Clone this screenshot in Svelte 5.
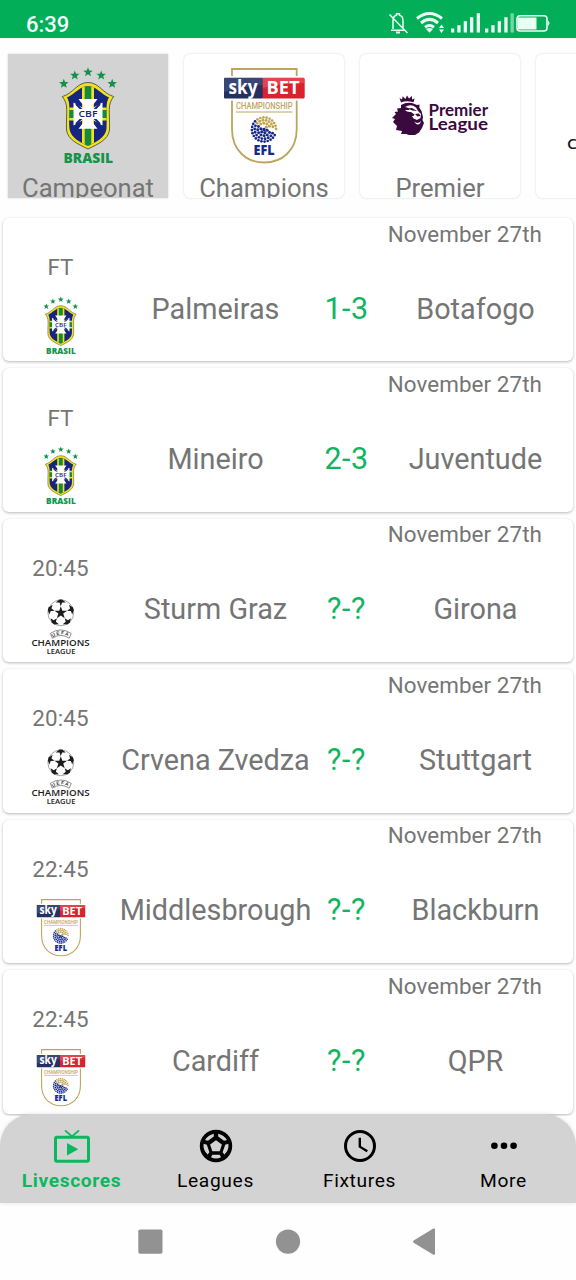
<script>
  const leagues = [
    { name: 'Campeonat', logo: 'brasil', active: true },
    { name: 'Champions', logo: 'efl' },
    { name: 'Premier', logo: 'premier' },
    { name: '', logo: 'ucl' }
  ];

  const matches = [
    { time: 'FT', logo: 'brasil', home: 'Palmeiras', score: '1-3', away: 'Botafogo' },
    { time: 'FT', logo: 'brasil', home: 'Mineiro', score: '2-3', away: 'Juventude' },
    { time: '20:45', logo: 'ucl', home: 'Sturm Graz', score: '?-?', away: 'Girona' },
    { time: '20:45', logo: 'ucl', home: 'Crvena Zvedza', score: '?-?', away: 'Stuttgart' },
    { time: '22:45', logo: 'efl', home: 'Middlesbrough', score: '?-?', away: 'Blackburn' },
    { time: '22:45', logo: 'efl', home: 'Cardiff', score: '?-?', away: 'QPR' }
  ];

  const polygon = (cx, cy, r, inner, rot = 0) => {
    const pts = [];
    for (let i = 0; i < 10; i++) {
      const a = ((rot - 90 + i * 36) * Math.PI) / 180;
      const d = i % 2 ? inner : r;
      pts.push(`${(cx + d * Math.cos(a)).toFixed(2)},${(cy + d * Math.sin(a)).toFixed(2)}`);
    }
    return pts.join(' ');
  };

  const crestStars = [[48, 4.2], [34.8, 7.4], [61.2, 7.4], [23.8, 15.8], [72.2, 15.8]];

  // Outer stars of the Champions League ball
  const ballStars = [0, 1, 2, 3, 4].map((i) => {
    const a = ((-90 + i * 72) * Math.PI) / 180;
    return { x: 48 + 20 * Math.cos(a), y: 24.7 + 20 * Math.sin(a), rot: i * 72 + 180 };
  });

  // Dots of the EFL ball, gold in the upper right swirl
  const dots = [];
  [[0, 1], [3.2, 6], [6.3, 12], [9.3, 18], [12.1, 24]].forEach(([r, n], k) => {
    for (let i = 0; i < n; i++) {
      const a = (i / n) * Math.PI * 2 + k * 0.25;
      const x = r * Math.cos(a);
      const y = r * Math.sin(a);
      const edge = -2 + x * 0.35;
      const gold = y < edge && x > -7;
      const gap = Math.abs(y - edge) < 0.9 && x > -4;
      if (!gap) dots.push({ x: 48 + x, y: 61.5 + y, r: 1.65 - k * 0.08, gold });
    }
  });
</script>

{#snippet logo(kind)}
  {#if kind === 'brasil'}
    <svg class="logo" viewBox="0 0 96 96">
      {#each crestStars as [x, y]}
        <polygon points={polygon(x, y, 5, 2.1)} fill="#11924a" />
      {/each}
      <clipPath id="shield">
        <path d="M48 18C40 18 35 26 27 29.500C31 36 28.500 42 29.500 61C31 70 40 74 48 78C56 74 65 70 66.500 61C67.500 42 65 36 69 29.500C61 26 56 18 48 18Z" />
      </clipPath>
      <path d="M48 14.500C37 14.500 34 25 22.300 28.600C29 37 26 43 26.500 62C28 72 38 76 48 81C58 76 68 72 69.500 62C70 43 67 37 73.700 28.600C62 25 59 14.500 48 14.500Z" fill="#f4e11c" stroke="#33423c" stroke-width=".8" />
      <g clip-path="url(#shield)">
        <rect x="20" y="14" width="56" height="68" fill="#16257f" />
        <path d="M42 14H54V82H42ZM20 39.500H76V52.500H20Z" fill="#f4e11c" />
        <path d="M44.700 14H51.300V82H44.700ZM20 42H76V50H20Z" fill="#138a3f" />
      </g>
      <path d="M38.500 31H57.500L53 37V40L57 37.500L62.500 34.500V57.500L53 52V55L57.500 60.700H38.500L43 55V52L33.500 57.500V34.500L43 40V37Z" fill="#fff" />
      <path d="M36 36L42 42M60 36L54 42M36 56L42 50M60 56L54 50" stroke="#16257f" stroke-width="2" />
      <rect x="37" y="41" width="22" height="10" fill="#fff" />
      <text x="38.500" y="49.300" textLength="19" lengthAdjust="spacingAndGlyphs" class="cbf">CBF</text>
      <text x="23.500" y="94.700" textLength="49.500" lengthAdjust="spacingAndGlyphs" class="brasil">BRASIL</text>
    </svg>
  {:else if kind === 'efl'}
    <svg class="logo" viewBox="0 0 96 96">
      <path d="M16 8V1H80.700V8M16 32.500V61C16 83 31 94.500 48.300 94.500S80.700 83 80.700 61V32.500" fill="none" stroke="#bea55c" stroke-width="1.800" />
      <rect x="8" y="9.800" width="39" height="20.600" rx="1" fill="#24305f" />
      <path d="M46.700 9.800H87.700L88.700 11V29.400L87.700 30.400H46.700Z" fill="#d9222e" />
      <path d="M8 10H46.700V17Q27 18 8 24Z" fill="#54638f" opacity=".45" />
      <path d="M46.700 10H88.700V15Q65 15 46.700 20Z" fill="#f4777d" opacity=".4" />
      <text x="12.500" y="25.500" textLength="29" lengthAdjust="spacingAndGlyphs" class="sky">sky</text>
      <text x="50.500" y="26" textLength="33" lengthAdjust="spacingAndGlyphs" class="bet">BET</text>
      <text x="20" y="41" textLength="56.500" lengthAdjust="spacingAndGlyphs" class="championship">CHAMPIONSHIP</text>
      <path d="M20 44H76.500" stroke="#bea55c" stroke-width="1" />
      {#each dots as d}
        <circle cx={d.x} cy={d.y} r={d.r} fill={d.gold ? '#c0a44e' : '#172a8c'} />
      {/each}
      <text x="37.500" y="86.500" textLength="21" lengthAdjust="spacingAndGlyphs" class="efl">EFL</text>
    </svg>
  {:else if kind === 'premier'}
    <svg class="logo" viewBox="0 0 96 96">
      <g fill="#3a0a3f">
        <path d="M7.500 30L10 31.500L10.700 28.300L13.400 31L15 27.500L17 30.600L20 28L20 31.400L22.600 30.500L21.500 34.200Q14 32 9 34.500Z" />
        <path d="M9 37Q14 34 20 35L25 37L27.500 36.500L27.300 39.500L29.500 43L31 49L30.500 52L32 55L30 60L27 64.500L23 67H17L14 66L9 66L10 63L4 62L5 58L1 54L3 51L0 50L4 46L2.500 44L6 43.500L5 40.500L9 40Z" />
      </g>
      <path d="M13 39Q19 35.500 24 39.500L26 43L29 46L28.500 50L25 52L21.500 50.500L20 48Q22 48.500 22.500 46.500L19 44Q15 44.500 13 42L17 42Q18 40 13 39Z" fill="#fff" />
      <path d="M15 40.500L20 40L25 43L20.500 42.500ZM23 46L27 45.500L28.500 48L25.500 48.500Z" fill="#3a0a3f" />
      <path d="M22 53.500Q26 56.500 29 53L28 55.500Q25 58 22 53.500Z" fill="#fff" />
      <text x="36.500" y="48" textLength="59.500" lengthAdjust="spacingAndGlyphs" class="pl">Premier</text>
      <text x="36.500" y="62" textLength="59.500" lengthAdjust="spacingAndGlyphs" class="pl">League</text>
    </svg>
  {:else}
    <svg class="logo" viewBox="0 0 96 96">
      <clipPath id="ball"><circle cx="48" cy="24.700" r="22" /></clipPath>
      <circle cx="48" cy="24.700" r="21.500" fill="none" stroke="#444" stroke-width=".8" />
      <polygon points={polygon(48, 24.7, 11, 4.3)} fill="#1c1c1c" />
      <g clip-path="url(#ball)">
        {#each ballStars as s}
          <polygon points={polygon(s.x, s.y, 9, 3.7, s.rot)} fill="#1c1c1c" />
        {/each}
      </g>
      <path id="uefa-arc" d="M34.500 65.500Q48 55.500 62.500 65.500" fill="none" />
      <path d="M30.500 59Q48 47.500 65.500 59L62 67Q48 57.500 34 67Z" fill="none" stroke="#333" stroke-width=".9" />
      <text class="uefa" textLength="27"><textPath href="#uefa-arc">UEFA</textPath></text>
      <text x="-1" y="80.800" textLength="97" lengthAdjust="spacingAndGlyphs" class="ucl">CHAMPIONS</text>
      <text x="24.500" y="93.500" textLength="48" lengthAdjust="spacingAndGlyphs" class="ucl small">LEAGUE</text>
    </svg>
  {/if}
{/snippet}

<div class="screen">
  <header class="status">
    <span>6:39</span>
    <svg width="166" height="38" viewBox="10 0 166 38" fill="none" stroke="#e9fff3">
      <path d="M15 30.200H29M17 29V21Q17 16 20.500 15.200V13.700H23.500V15.200Q27 16 27 21V29M13.500 14.500L31.500 33" stroke-width="1.500" />
      <path d="M20 32.500H24" stroke-width="2" />
      <g stroke-width="3">
        <path d="M41 18.500Q53.500 8.500 66 18.500" />
        <path d="M45 23Q53.500 15.800 62 23" />
        <path d="M49 27.300Q53.500 23.800 58 27.300" />
      </g>
      <g fill="#e9fff3" stroke="none">
        <path d="M50 29Q53.500 27 57 29L53.500 32.800Z" />
        <path d="M65.500 24.500L68 28H63ZM65.500 33L68 29.500H63Z" />
        <path d="M75 28.500h3.300v4h-3.300zM81.300 25.300h3.300v7.200h-3.300zM87.700 21.300h3.300v11.200h-3.300zM94 17.300h3.300v15.200h-3.300zM100.700 13.300h3.300v19.200h-3.300z" />
        <path d="M109 28.500h3.300v4h-3.300zM115.300 25.300h3.300v7.200h-3.300zM121.700 21.300h3.300v11.200h-3.300zM128.300 17.300h3.300v15.200h-3.300z" />
        <path d="M134.500 13.300h3.300v19.200h-3.300z" opacity=".5" />
        <path d="M142 17.500h18.500v12H142z" />
        <path d="M172 20.500q3 2.500 0 5.500z" />
      </g>
      <rect x="141" y="15.700" width="30" height="15.300" rx="3" stroke-width="1.600" />
    </svg>
  </header>

  <div class="tabs">
    {#each leagues as l}
      <div class="tab" class:active={l.active}>
        {@render logo(l.logo)}
        <span>{l.name}</span>
      </div>
    {/each}
  </div>

  <main class="matches">
    {#each matches as m}
      <article class="match">
        <div class="date">November 27th</div>
        <div class="row">
          <div class="when">
            <span>{m.time}</span>
            {@render logo(m.logo)}
          </div>
          <div class="team">{m.home}</div>
          <div class="team score">{m.score}</div>
          <div class="team">{m.away}</div>
        </div>
      </article>
    {/each}
  </main>

  <nav class="bottom">
    <div class="item selected">
      <svg width="38" height="38" viewBox="0 0 38 38" fill="none" stroke="currentColor">
        <rect x="2.500" y="10.300" width="33" height="24" rx="1.500" stroke-width="3" />
        <path d="M12 3.300L19 9.500L26 3.300" stroke-width="1.700" />
        <path d="M14 16V28.500L25.300 22.200Z" fill="currentColor" stroke="none" />
      </svg>
      <span>Livescores</span>
    </div>
    <div class="item">
      <svg width="38" height="38" viewBox="0 0 38 38">
        <circle cx="19" cy="19" r="16.200" />
        <g fill="#d3d3d3">
          <path d="M19 13.300L24.900 17.600L22.700 24.300H15.300L13.100 17.600Z" />
          <path d="M16.800 6.800V9.600L11 13.800L8 12.900Q11 8.300 16.800 6.800ZM21.200 6.800V9.600L27 13.800L30 12.900Q27 8.300 21.200 6.800Z" />
          <path d="M6.600 16.800L9.800 17.800L12.400 25.300L10.600 27.500Q5.800 23 6.600 16.800ZM31.400 16.800L28.200 17.800L25.600 25.300L27.400 27.500Q32.200 23 31.400 16.800ZM15.300 27.700H22.700L24 30.200Q19 32.800 14 30.200Z" />
        </g>
      </svg>
      <span>Leagues</span>
    </div>
    <div class="item">
      <svg width="38" height="38" viewBox="0 0 38 38" fill="none" stroke="#000">
        <circle cx="19" cy="19" r="14.500" stroke-width="3" />
        <path d="M18.800 10.700V19.700L26.300 24.300" stroke-width="2.400" />
      </svg>
      <span>Fixtures</span>
    </div>
    <div class="item">
      <svg width="38" height="38" viewBox="0 0 38 38">
        <circle cx="9.400" cy="18.800" r="3.300" /><circle cx="19" cy="18.800" r="3.300" /><circle cx="28.600" cy="18.800" r="3.300" />
      </svg>
      <span>More</span>
    </div>
  </nav>

  <footer class="system">
    <svg width="300" height="28" viewBox="0 0 300 28" fill="#929292">
      <rect x=".3" y="1.500" width="24.200" height="24.200" rx="1.800" />
      <circle cx="150" cy="13.600" r="12.100" />
      <path d="M295.500 1V26.500Q295 27.500 293.500 26.700L274.500 15.200Q272.500 13.700 274.500 12.400L293.500 1Q295 .2 295.500 1Z" transform="translate(1.500 -.2)" />
    </svg>
  </footer>
</div>

<style>
  :global(body) { margin: 0; background: #fefefe; }
  .screen {
    width: 576px; height: 1280px; overflow: hidden; display: flex; flex-direction: column;
    font-family: Roboto, sans-serif; color: #757575; background: #fefefe;
  }
  .status {
    flex: none; height: 38px; background: #02ae58; color: #f3fff8; display: flex;
    justify-content: space-between; padding: 0 24px 0 26px; box-sizing: border-box;
    font-size: 22px; font-weight: 500; line-height: 49px;
  }
  .status svg { flex: none; }
  .logo { display: block; flex: none; width: 96px; height: 96px; overflow: visible; }
  .tabs { flex: none; display: flex; gap: 16px; padding: 16px 0 0 8px; height: 164px; overflow: hidden; box-sizing: border-box; }
  .tab {
    flex: none; width: 160px; height: 144px; box-sizing: border-box; overflow: hidden; background: #fff;
    border-radius: 6px; box-shadow: 0 0 2px rgba(0, 0, 0, .18); padding-top: 13.500px;
    display: flex; flex-direction: column; align-items: center;
  }
  .tab.active { background: #d3d3d3; border-radius: 0; }
  .tab span { margin-top: 6.500px; font-size: 25.600px; line-height: 36px; white-space: nowrap; }
  .matches {
    flex: 1; min-height: 0; overflow: hidden; display: flex; flex-direction: column; gap: 7px;
    padding: 16px 3px 0;
  }
  .match {
    flex: none; height: 143.430px; background: #fff; border-radius: 6px;
    box-shadow: 0 1px 3px rgba(0, 0, 0, .28);
  }
  .date { text-align: right; padding: .500px 31px 0 0; font-size: 22.400px; line-height: 30px; letter-spacing: .08px; margin-bottom: .500px; }
  .row { display: grid; grid-template-columns: 115px 195px 67px 191px; }
  .when { display: flex; flex-direction: column; align-items: center; padding-top: 5.200px; }
  .when span { font-size: 22.400px; line-height: 26px; letter-spacing: .1px; margin-bottom: 16.800px; }
  .when .logo { width: 57.600px; height: 57.600px; }
  .team { margin-top: 41.600px; text-align: center; font-size: 28.800px; line-height: 36px; white-space: nowrap; }
  .score { color: #0fb65f; font-size: 30.500px; letter-spacing: .5px; }
  .bottom {
    flex: none; height: 89.500px; background: #d3d3d3; border-radius: 32px 32px 0 0; display: flex;
    color: #000; margin-top: -2px; position: relative; box-shadow: 0 0 4px rgba(0, 0, 0, .12);
  }
  .item { width: 144px; display: flex; flex-direction: column; align-items: center; padding-top: 13px; box-sizing: border-box; }
  .item svg { display: block; }
  .item span { font-size: 19.200px; line-height: 24px; margin-top: 4px; letter-spacing: .65px; margin-left: -1px; }
  .selected { color: #0bb85f; }
  .selected span { font-weight: 700; }
  .system { flex: none; height: 77px; background: #fefefe; padding: 25px 0 0 138px; box-sizing: border-box; }

  .cbf { font: 600 9.500px 'Open Sans', sans-serif; fill: #16257f; }
  .brasil { font: 800 13.800px 'Open Sans', sans-serif; fill: #13944a; }
  .sky { font: 700 20px 'Open Sans', sans-serif; fill: #fff; }
  .bet { font: 700 17.500px 'Open Sans', sans-serif; fill: #fff; }
  .championship { font: 500 9.500px Roboto, sans-serif; fill: #bea55c; }
  .efl { font: 800 13.500px 'Open Sans', sans-serif; fill: #172a8c; }
  .pl { font: 700 17px Lato, sans-serif; fill: #3a0a3f; }
  .uefa { font: 700 8px 'Liberation Sans', sans-serif; fill: #333; }
  .ucl { font: 600 14.500px 'Open Sans', sans-serif; fill: #1c1c1c; }
  .ucl.small { font-size: 11.500px; }
</style>
